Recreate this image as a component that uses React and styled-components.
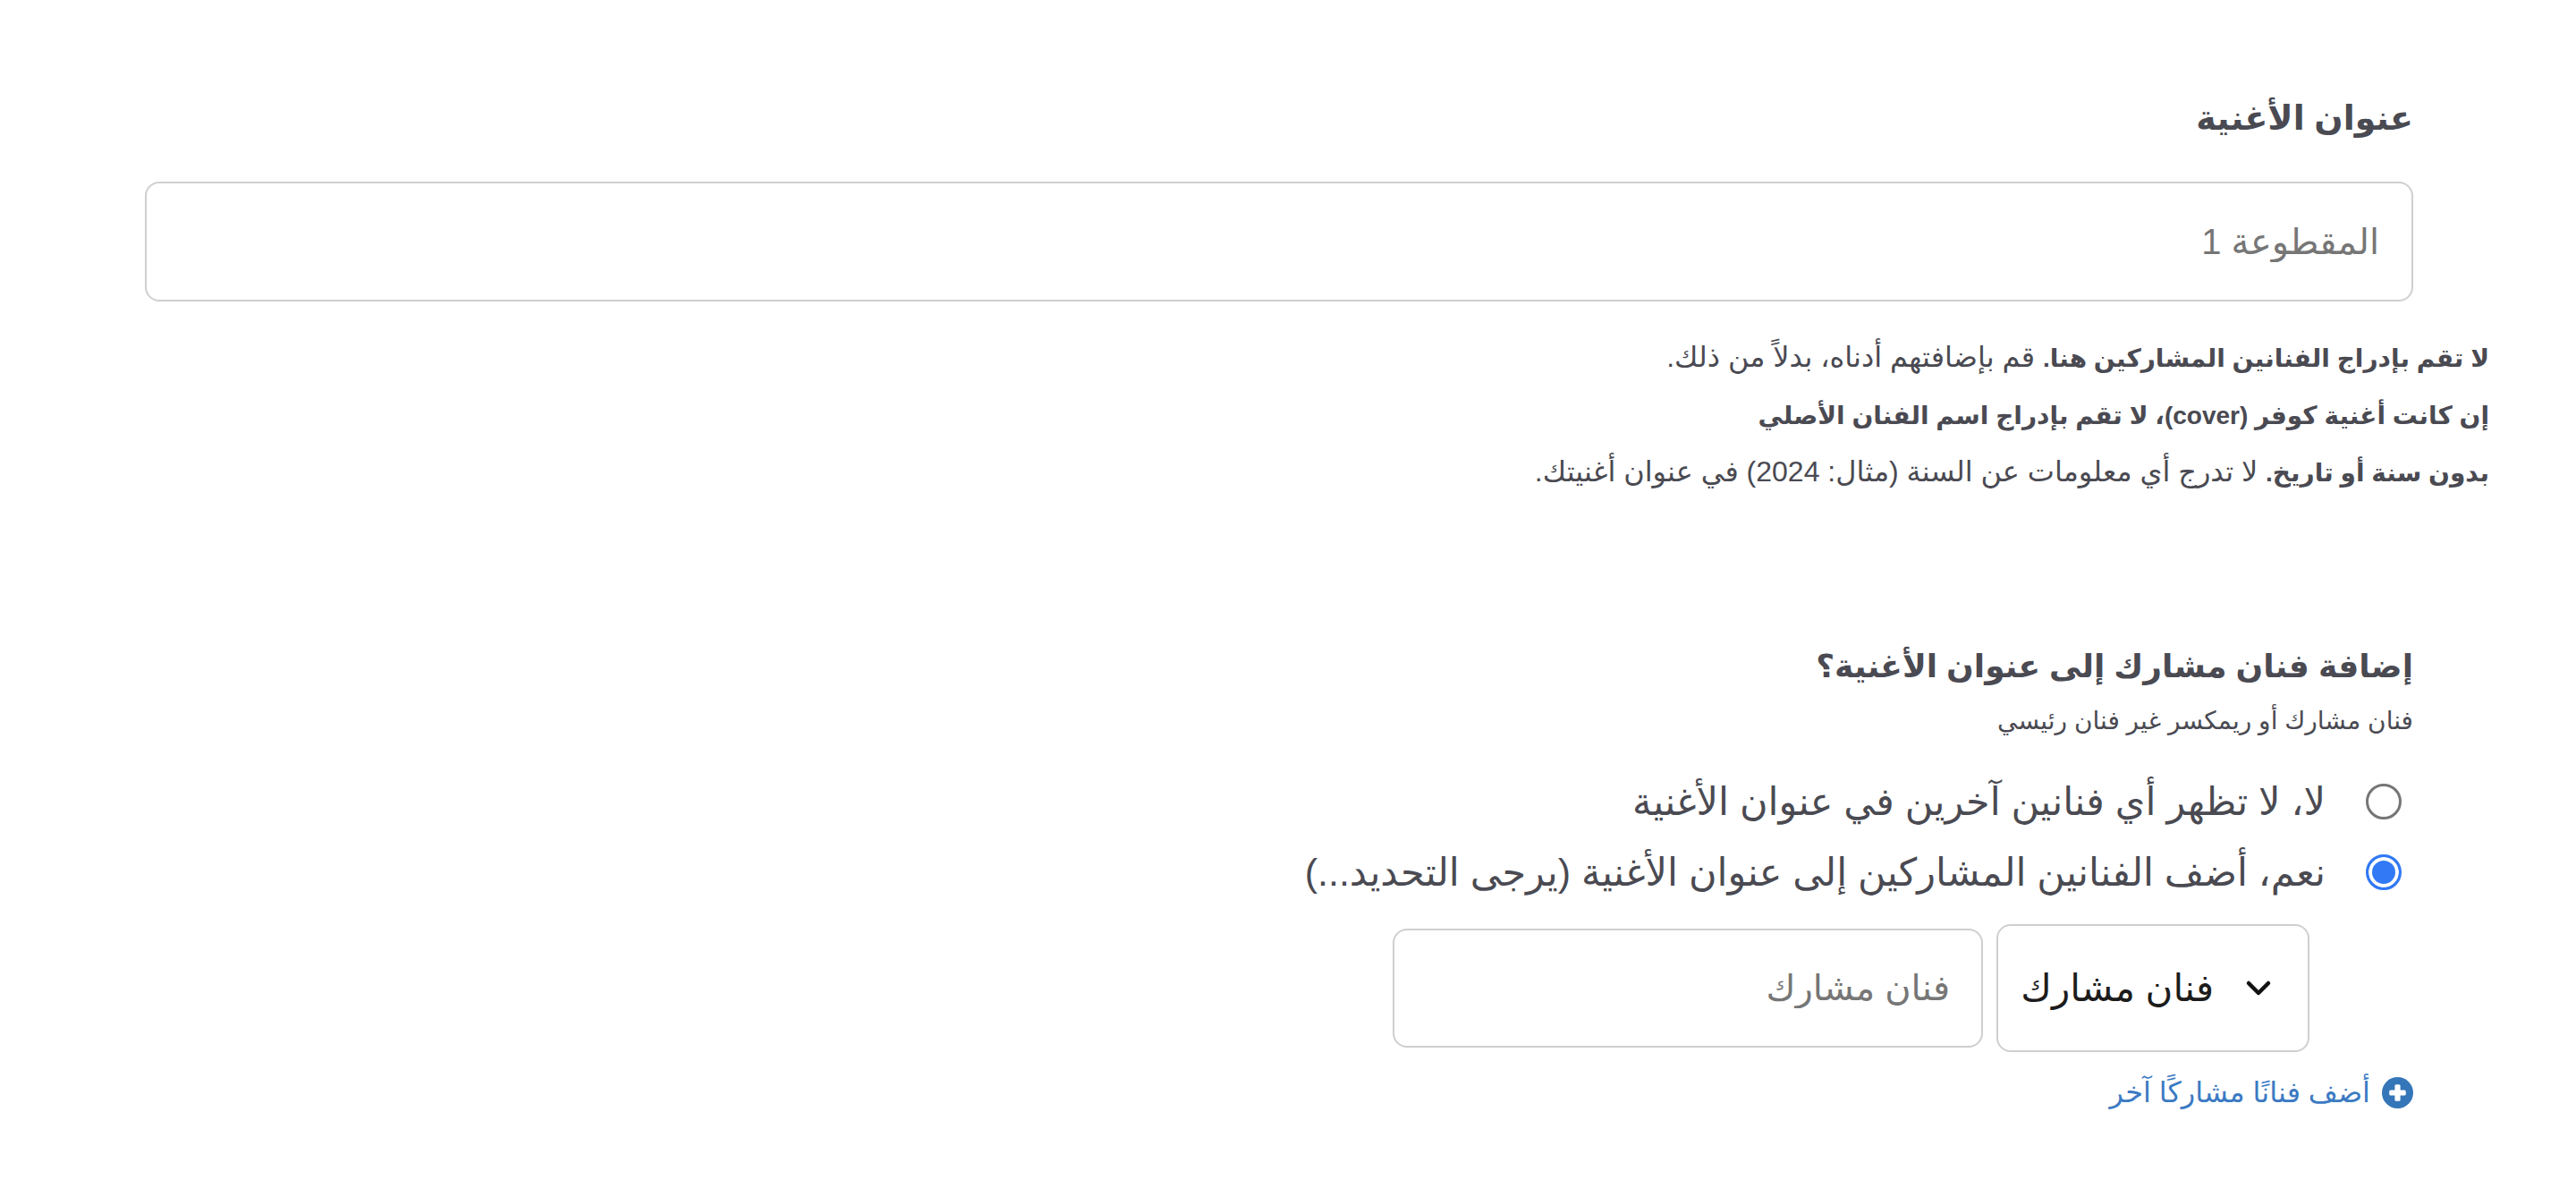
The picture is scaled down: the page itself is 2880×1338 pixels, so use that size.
import React, { useState } from "react";
import styled, { createGlobalStyle } from "styled-components";

const GlobalStyle = createGlobalStyle`
  html, body {
    margin: 0;
    padding: 0;
    background: #fff;
  }
  body {
    font-family: "Liberation Sans", "DejaVu Sans", sans-serif;
    color: #4a4a52;
  }
`;

const helpLines = [
  { strong: "لا تقم بإدراج الفنانين المشاركين هنا.", rest: " قم بإضافتهم أدناه، بدلاً من ذلك." },
  { strong: "إن كانت أغنية كوفر (cover)، لا تقم بإدراج اسم الفنان الأصلي", rest: "" },
  { strong: "بدون سنة أو تاريخ.", rest: " لا تدرج أي معلومات عن السنة (مثال: 2024) في عنوان أغنيتك." },
];

function ChevronDown() {
  return (
    <svg width="30" height="20" viewBox="0 0 30 20" aria-hidden="true">
      <polyline points="4,4 15,15 26,4" fill="none" stroke="#111" strokeWidth="4.5" strokeLinecap="round" strokeLinejoin="round" />
    </svg>
  );
}

function PlusCircle() {
  return (
    <svg width="35" height="35" viewBox="0 0 34 34" aria-hidden="true">
      <circle cx="17" cy="17" r="17" fill="#3576b9" />
      <rect x="8" y="14" width="18" height="6" rx="1.5" fill="#fff" />
      <rect x="14" y="8" width="6" height="18" rx="1.5" fill="#fff" />
    </svg>
  );
}

function App() {
  const [featured, setFeatured] = useState("yes");

  return (
    <Page dir="rtl">
      <GlobalStyle />
      <Section>
        <Heading>عنوان الأغنية</Heading>
        <TitleInput type="text" placeholder="المقطوعة 1" />
        <HelpList>
          {helpLines.map((line, i) => (
            <li key={i}>
              <b>{line.strong}</b>
              {line.rest}
            </li>
          ))}
        </HelpList>
      </Section>

      <Section $top="161px">
        <Heading $size="36px">إضافة فنان مشارك إلى عنوان الأغنية؟</Heading>
        <SubText>فنان مشارك أو ريمكسر غير فنان رئيسي</SubText>

        <RadioGroup>
          <RadioRow>
            <Radio
              type="radio"
              name="featured"
              checked={featured === "no"}
              onChange={() => setFeatured("no")}
            />
            <span>لا، لا تظهر أي فنانين آخرين في عنوان الأغنية</span>
          </RadioRow>
          <RadioRow>
            <Radio
              type="radio"
              name="featured"
              checked={featured === "yes"}
              onChange={() => setFeatured("yes")}
            />
            <span>نعم، أضف الفنانين المشاركين إلى عنوان الأغنية (يرجى التحديد...)</span>
          </RadioRow>
        </RadioGroup>

        <ArtistRow>
          <RoleSelect type="button">
            <ChevronDown />
            <span>فنان مشارك</span>
          </RoleSelect>
          <ArtistInput type="text" placeholder="فنان مشارك" />
        </ArtistRow>

        <AddLink href="#add">
          <PlusCircle />
          <span>أضف فنانًا مشاركًا آخر</span>
        </AddLink>
      </Section>
    </Page>
  );
}

export default App;

const Page = styled.div`
  direction: rtl;
  padding: 108px 182px 60px 162px;
`;

const Section = styled.section`
  display: flex;
  flex-direction: column;
  align-items: stretch;
  margin-top: ${(p) => p.$top || "0"};
`;

const Heading = styled.h2`
  margin: 0;
  font-size: ${(p) => p.$size || "38px"};
  line-height: 48px;
  font-weight: 700;
  color: #4a4a52;
`;

const TitleInput = styled.input`
  box-sizing: border-box;
  margin-top: 47px;
  height: 134px;
  width: 100%;
  padding: 0 36px;
  border: 2px solid #cfcfcf;
  border-radius: 16px;
  font-family: inherit;
  font-size: 40px;
  color: #333;
  background: #fff;
  outline: none;

  &::placeholder {
    color: #767676;
  }
`;

const HelpList = styled.ul`
  list-style: none;
  padding: 0;
  margin: 31px -85px 0 0;
  font-size: 32px;
  line-height: 63px;
  color: #4a4a52;

  b {
    font-size: 28px;
    font-weight: 700;
  }
`;

const SubText = styled.p`
  margin: 20px 0 0;
  font-size: 28px;
  line-height: 34px;
  color: #4a4a52;
`;

const RadioGroup = styled.div`
  display: flex;
  flex-direction: column;
  margin-top: 33px;
  padding-right: 13px;
`;

const RadioRow = styled.label`
  display: flex;
  align-items: center;
  gap: 45px;
  height: 79px;
  font-size: 43px;
  color: #4a4a52;
  cursor: pointer;
`;

const Radio = styled.input`
  appearance: none;
  box-sizing: border-box;
  flex: none;
  width: 40px;
  height: 40px;
  margin: 0;
  border: 3px solid #767676;
  border-radius: 50%;
  background: #fff;

  &:checked {
    border-color: #3179f5;
    background: #3179f5;
    box-shadow: inset 0 0 0 4px #fff;
  }
`;

const ArtistRow = styled.div`
  display: flex;
  align-items: center;
  gap: 15px;
  margin: 19px 116px 0 0;
`;

const RoleSelect = styled.button`
  box-sizing: border-box;
  display: flex;
  align-items: center;
  gap: 35px;
  width: 350px;
  height: 143px;
  padding: 0 40px 0 20px;
  border: 2px solid #cfcfcf;
  border-radius: 16px;
  background: #fff;
  font-family: inherit;
  font-size: 42px;
  color: #1c1c1c;
  cursor: pointer;
`;

const ArtistInput = styled.input`
  box-sizing: border-box;
  width: 660px;
  height: 133px;
  padding: 0 35px;
  border: 2px solid #cfcfcf;
  border-radius: 16px;
  font-family: inherit;
  font-size: 40px;
  color: #333;
  outline: none;

  &::placeholder {
    color: #767676;
  }
`;

const AddLink = styled.a`
  display: flex;
  align-items: center;
  gap: 13px;
  margin-top: 25px;
  align-self: flex-start;
  font-size: 32px;
  line-height: 40px;
  color: #3b7ac3;
  text-decoration: none;
`;
